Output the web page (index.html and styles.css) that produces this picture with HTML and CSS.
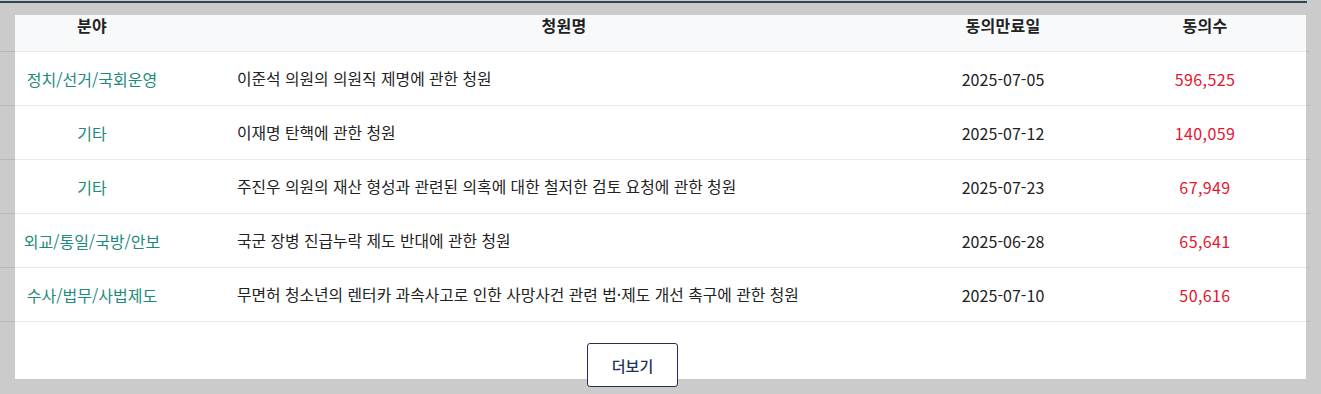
FILE: index.html
```html
<!DOCTYPE html>
<html lang="ko">
<head>
<meta charset="utf-8">
<title>청원 목록</title>
<link rel="stylesheet" href="styles.css">
</head>
<body>
<div class="topline"></div>
<div class="panel">
  <div class="row head">
    <div class="c1">분야</div>
    <div class="c2 h2">청원명</div>
    <div class="c3">동의만료일</div>
    <div class="c4">동의수</div>
  </div>
  <div class="row">
    <div class="c1 cat">정치/선거/국회운영</div>
    <div class="c2 title">이준석 의원의 의원직 제명에 관한 청원</div>
    <div class="c3 date">2025-07-05</div>
    <div class="c4 num">596,525</div>
  </div>
  <div class="row">
    <div class="c1 cat">기타</div>
    <div class="c2 title">이재명 탄핵에 관한 청원</div>
    <div class="c3 date">2025-07-12</div>
    <div class="c4 num">140,059</div>
  </div>
  <div class="row">
    <div class="c1 cat">기타</div>
    <div class="c2 title">주진우 의원의 재산 형성과 관련된 의혹에 대한 철저한 검토 요청에 관한 청원</div>
    <div class="c3 date">2025-07-23</div>
    <div class="c4 num">67,949</div>
  </div>
  <div class="row">
    <div class="c1 cat">외교/통일/국방/안보</div>
    <div class="c2 title">국군 장병 진급누락 제도 반대에 관한 청원</div>
    <div class="c3 date">2025-06-28</div>
    <div class="c4 num">65,641</div>
  </div>
  <div class="row">
    <div class="c1 cat">수사/법무/사법제도</div>
    <div class="c2 title">무면허 청소년의 렌터카 과속사고로 인한 사망사건 관련 법·제도 개선 촉구에 관한 청원</div>
    <div class="c3 date">2025-07-10</div>
    <div class="c4 num">50,616</div>
  </div>
  <div class="more-wrap">
    <button class="more">더보기</button>
  </div>
</div>
</body>
</html>
```

FILE: styles.css
```css
html, body {
  margin: 0;
  padding: 0;
}
body {
  background: #cbcbcb;
  height: 394px;
  overflow: hidden;
  font-family: "Noto Sans CJK KR", "Noto Sans", sans-serif;
  font-size: 16px;
  color: #222;
}
.topline {
  margin-top: 1px;
  width: 1307px;
  height: 2px;
  background: #2e4654;
}
.panel {
  margin: 12px 0 0 15px;
  width: 1291px;
  height: 364px;
  background: #fff;
}
.row {
  display: flex;
  align-items: center;
  margin: 0 -4px 0 -15px;
  padding: 0 4px 0 15px;
  height: 53px;
  border-bottom: 1px solid rgba(0, 0, 0, 0.085);
  line-height: 20px;
  background-clip: content-box;
}
.row.head {
  height: 36px;
  align-items: flex-start;
  background-color: #f8f9fb;
  font-weight: 700;
  color: #222;
  letter-spacing: 0.3px;
}
.c1 { width: 154px; text-align: center; flex: none; }
.c2 { width: 733px; flex: none; }
.c3 { width: 202px; text-align: center; flex: none; }
.c4 { width: 202px; text-align: center; flex: none; }
.h2 { text-align: center; padding-left: 57px; box-sizing: border-box; }
.title { padding-left: 68px; box-sizing: border-box; color: #222; font-size: 15.8px; }
.cat { color: #1d8a7c; }
.date { letter-spacing: 0.05px; }
.num { color: #e4152f; letter-spacing: 0.4px; }
.more-wrap {
  padding: 21px 0 0 572px;
}
.more {
  width: 91px;
  height: 44px;
  border: 1px solid #23305a;
  border-radius: 3px;
  background: #fff;
  color: #23305a;
  font-family: "Noto Sans CJK KR", "Noto Sans", sans-serif;
  font-size: 15px;
  font-weight: 500;
  padding: 0;
  display: block;
}
```
